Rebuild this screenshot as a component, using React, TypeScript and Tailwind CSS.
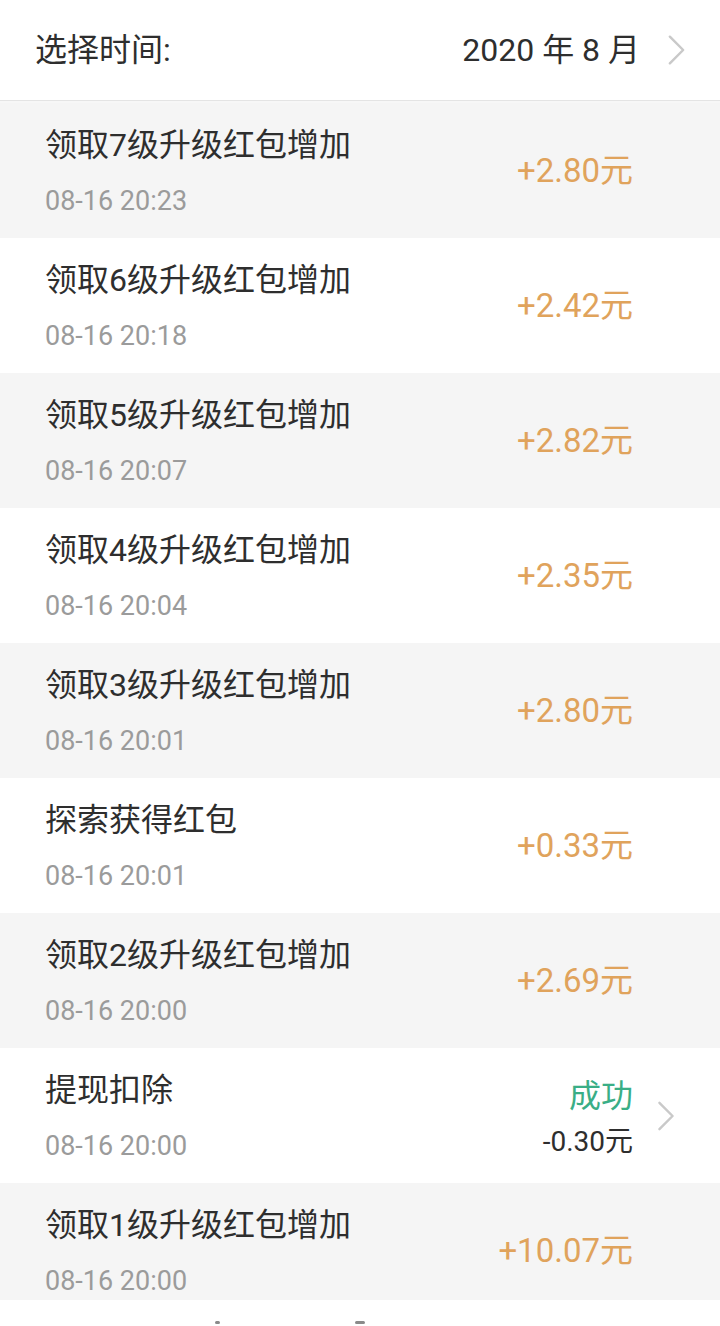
import React from "react";

interface Record {
  title: string;
  time: string;
  amount: string;
}

const records: Record[] = [
  { title: "领取7级升级红包增加", time: "08-16 20:23", amount: "+2.80元" },
  { title: "领取6级升级红包增加", time: "08-16 20:18", amount: "+2.42元" },
  { title: "领取5级升级红包增加", time: "08-16 20:07", amount: "+2.82元" },
  { title: "领取4级升级红包增加", time: "08-16 20:04", amount: "+2.35元" },
  { title: "领取3级升级红包增加", time: "08-16 20:01", amount: "+2.80元" },
  { title: "探索获得红包", time: "08-16 20:01", amount: "+0.33元" },
  { title: "领取2级升级红包增加", time: "08-16 20:00", amount: "+2.69元" },
];

const Chevron: React.FC<{ className?: string }> = ({ className }) => (
  <svg viewBox="0 0 20 32" className={className} fill="none">
    <path d="M3 2 L17 16 L3 30" stroke="#c9c9c9" strokeWidth="2.6" strokeLinecap="round" strokeLinejoin="round" />
  </svg>
);

const RowText: React.FC<{ title: string; time: string }> = ({ title, time }) => (
  <div className="flex flex-col pt-[26px]">
    <p className="text-[32px] leading-[32px] text-[#2e2e2e]">{title}</p>
    <p className="mt-[27px] text-[27px] leading-[27px] text-[#9b9b9b]">{time}</p>
  </div>
);

const RecordRow: React.FC<{ item: Record; gray: boolean; height?: string }> = ({ item, gray, height }) => (
  <div className={`flex ${height ?? "h-[135px]"} pl-[45px] ${gray ? "bg-[#f5f5f5]" : "bg-white"}`}>
    <RowText title={item.title} time={item.time} />
    <div className="ml-auto flex h-[135px] items-center pr-[87px]">
      <span className="text-[33px] leading-[33px] text-[#e0a35c]">{item.amount}</span>
    </div>
  </div>
);

export default function App() {
  return (
    <div
      className="w-[720px] h-[1326px] overflow-hidden bg-white"
      style={{ fontFamily: 'Roboto, "Noto Sans CJK SC", sans-serif' }}
    >
      <div className="flex h-[100px] items-center pl-[35px] pr-[34px]">
        <span className="text-[32px] leading-[32px] text-[#2e2e2e]">选择时间:</span>
        <span className="ml-auto text-[32px] leading-[32px] text-[#2e2e2e]">2020 年 8 月</span>
        <Chevron className="ml-[27px] h-[32px] w-[19px]" />
      </div>
      <div className="h-[1px] bg-[#e4e4e4]" />
      <div className="h-[2px] bg-[#f7f7f7]" />

      {records.map((r, i) => (
        <RecordRow key={i} item={r} gray={i % 2 === 0} />
      ))}

      <div className="flex h-[135px] bg-white pl-[45px]">
        <RowText title="提现扣除" time="08-16 20:00" />
        <div className="ml-auto flex flex-col items-end pt-[32px]">
          <span className="text-[32px] leading-[32px] text-[#3aae86]">成功</span>
          <span className="mt-[16px] text-[28px] leading-[28px] text-[#2e2e2e]">-0.30元</span>
        </div>
        <div className="flex w-[87px] items-center pl-[23px]">
          <Chevron className="h-[30px] w-[20px]" />
        </div>
      </div>

      <RecordRow
        item={{ title: "领取1级升级红包增加", time: "08-16 20:00", amount: "+10.07元" }}
        gray
        height="h-[117px] overflow-hidden"
      />

      <div className="flex h-[26px] items-end bg-white pb-[2px] pl-[215px]">
        <div className="h-[3px] w-[5px] rounded-full bg-[#8a8a8a]" />
        <div className="ml-[135px] h-[3px] w-[10px] rounded-full bg-[#8a8a8a]" />
      </div>
    </div>
  );
}
